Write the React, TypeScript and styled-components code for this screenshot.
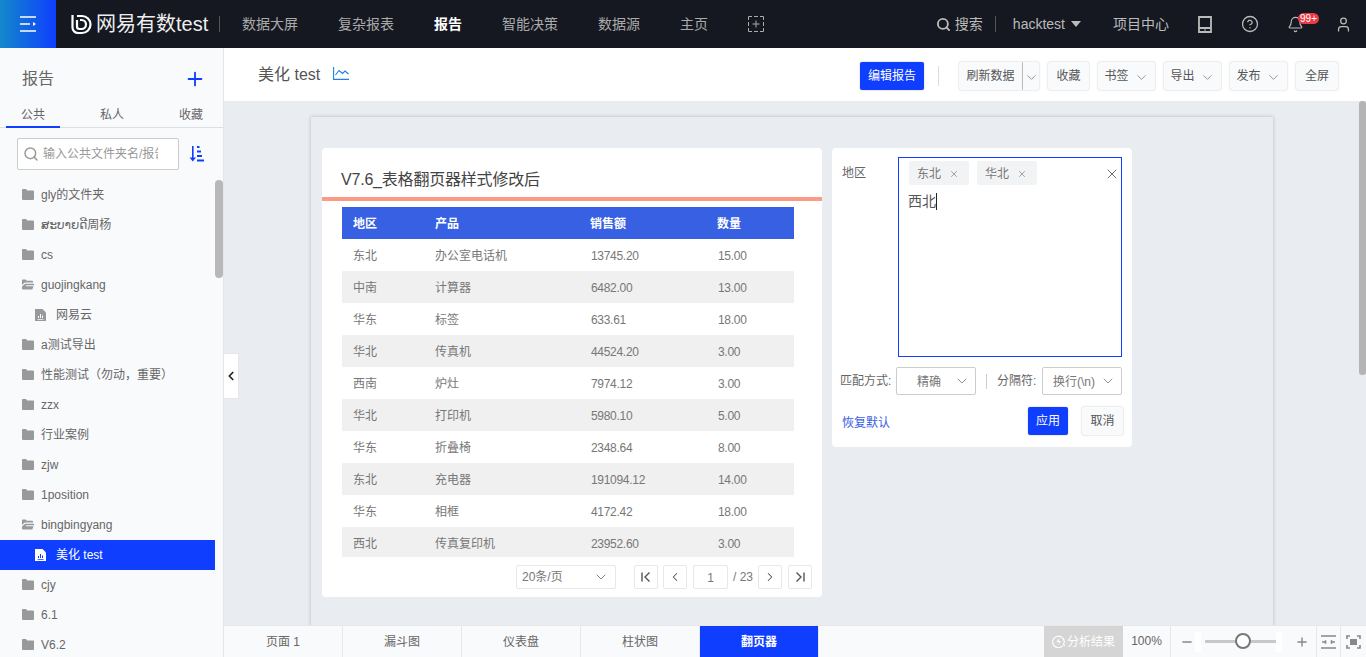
import React from "react";
import styled, { createGlobalStyle } from "styled-components";
import { ChevronDown, ChevronLeft, ChevronRight, Plus, Search, X, Minus, CircleHelp, Bell, User } from "lucide-react";

const Global = createGlobalStyle`
  html, body { margin: 0; padding: 0; height: 100%; overflow: hidden; }
  body { font-family: "Liberation Sans", "Noto Sans CJK SC", "DejaVu Sans", sans-serif; font-size: 12px; line-height: 1.3; color: #666; }
  * { box-sizing: border-box; }
`;

const BLUE = "#0f3eff";

const Shell = styled.div`
  width: 1366px;
  height: 657px;
  display: flex;
  flex-direction: column;
  overflow: hidden;
`;

const Header = styled.header`
  height: 48px;
  flex: none;
  display: flex;
  align-items: center;
  background: #151821;
  color: #bbb;
  font-size: 14px;
`;

const MenuToggle = styled.div`
  width: 56px;
  height: 48px;
  flex: none;
  display: flex;
  align-items: center;
  justify-content: center;
  background: linear-gradient(90deg, #1389cb, ${BLUE});
`;

const Logo = styled.div`
  display: flex;
  align-items: center;
  margin-left: 15px;
  gap: 4px;
  color: #eee;
  font-size: 20px;
  width: 148px;
  white-space: nowrap;
`;

const NavDivider = styled.span`
  width: 1px;
  height: 16px;
  background: #555;
  flex: none;
`;

const Nav = styled.nav`
  display: flex;
  align-items: center;
  gap: 40px;
  margin-left: 22px;
`;

const NavItem = styled.span<{ $active?: boolean }>`
  color: ${({ $active }) => ($active ? "#fff" : "#aaa")};
  font-weight: ${({ $active }) => ($active ? 700 : 400)};
`;

const HeaderRight = styled.div`
  margin-left: auto;
  display: flex;
  align-items: center;
  padding-right: 14px;
`;

const HeaderSearch = styled.span`
  display: flex;
  align-items: center;
  gap: 4px;
  margin-right: 12px;
`;

const UserName = styled.span`
  display: flex;
  align-items: center;
  gap: 6px;
  margin-left: 17px;
  margin-right: 32px;
`;

const Caret = styled.i`
  width: 0;
  height: 0;
  border-left: 5px solid transparent;
  border-right: 5px solid transparent;
  border-top: 6px solid #bbb;
`;

const HeaderIcon = styled.span<{ $gap: number }>`
  position: relative;
  display: flex;
  margin-left: ${({ $gap }) => $gap}px;
`;

const Badge = styled.b`
  position: absolute;
  left: 11px;
  top: -3px;
  height: 11px;
  width: 21px;
  border-radius: 6px;
  background: #ec3a45;
  color: #fff;
  font-size: 10px;
  line-height: 11px;
  font-weight: 400;
  text-align: center;
`;

const Body = styled.div`
  flex: 1;
  min-height: 0;
  display: flex;
  position: relative;
`;

const Sidebar = styled.aside`
  width: 224px;
  flex: none;
  position: relative;
  background: #f9fafc;
  border-right: 1px solid #e4e6ea;
  overflow: hidden;
`;

const SideTitle = styled.div`
  height: 61px;
  display: flex;
  align-items: center;
  justify-content: space-between;
  padding: 2px 17px 0 22px;
  font-size: 16px;
  color: #666;
  svg { margin-top: -2px; }
`;

const Tabs = styled.div`
  display: flex;
  height: 19px;
  padding-left: 6px;
  gap: 25px;
  border-bottom: 1px solid #dcdfe4;
`;

const SideTab = styled.div<{ $active?: boolean }>`
  width: 54px;
  text-align: center;
  line-height: 12px;
  height: 19px;
  color: #666;
  border-bottom: 2px solid ${({ $active }) => ($active ? BLUE : "transparent")};
`;

const SearchRow = styled.div`
  display: flex;
  align-items: center;
  gap: 10px;
  padding: 10px 0 10px 17px;
`;

const SearchBox = styled.div`
  width: 162px;
  height: 32px;
  background: #fff;
  border: 1px solid #ccc;
  border-radius: 2px;
  display: flex;
  align-items: center;
  gap: 4px;
  padding-left: 5px;
  color: #999;
  overflow: hidden;
  white-space: nowrap;
`;

const Clip = styled.span`
  width: 115px;
  padding-top: 2px;
  overflow: hidden;
`;

const Row = styled.div<{ $child?: boolean; $active?: boolean }>`
  width: 215px;
  height: 30px;
  display: flex;
  align-items: center;
  gap: ${({ $child }) => ($child ? 10 : 7)}px;
  padding-left: ${({ $child }) => ($child ? 35 : 22)}px;
  padding-top: 2px;
  background: ${({ $active }) => ($active ? BLUE : "transparent")};
  color: ${({ $active }) => ($active ? "#fff" : "#666")};
  white-space: nowrap;
  svg { margin-top: -3px; }
`;

const SideThumb = styled.div`
  position: absolute;
  left: 215px;
  top: 132px;
  width: 8px;
  height: 98px;
  border-radius: 4px;
  background: #b8b8b8;
`;

const CollapseHandle = styled.div`
  position: absolute;
  left: 224px;
  top: 305px;
  width: 15px;
  height: 46px;
  background: #fff;
  border: 1px solid #e4e6ea;
  border-left: none;
  display: flex;
  align-items: center;
  justify-content: center;
  color: #222;
  z-index: 2;
`;

const Main = styled.main`
  flex: 1;
  min-width: 0;
  display: flex;
  flex-direction: column;
  position: relative;
`;

const Toolbar = styled.div`
  height: 53px;
  flex: none;
  background: #fff;
  display: flex;
  align-items: center;
  padding: 0 28px 0 34px;
`;

const ReportTitle = styled.div`
  display: flex;
  align-items: center;
  gap: 13px;
  font-size: 16px;
  color: #555;
  margin-top: 2px;
  margin-right: auto;
  svg { margin-top: -3px; }
`;

const Actions = styled.div`
  display: flex;
  align-items: center;
  gap: 9px;
  margin-top: 3px;
`;

const Btn = styled.button<{ $w: number; $primary?: boolean }>`
  width: ${({ $w }) => $w}px;
  height: 28px;
  padding: 2px 0 0;
  display: inline-flex;
  align-items: center;
  justify-content: center;
  gap: 5px;
  font: inherit;
  font-size: 12px;
  border-radius: 2px;
  border: none;
  color: ${({ $primary }) => ($primary ? "#fff" : "#555")};
  background: ${({ $primary }) => ($primary ? BLUE : "#f9fafc")};
  box-shadow: 0 0 2px rgba(0, 0, 0, 0.25);
`;

const SplitBtn = styled(Btn)`
  border-right: 1px solid #ccc;
  border-radius: 2px 0 0 2px;
`;

const SplitCaret = styled(Btn)`
  margin-left: -9px;
  border-radius: 0 2px 2px 0;
`;

const ToolDivider = styled.span`
  width: 1px;
  height: 20px;
  background: #ddd;
  margin: 0 11px 0 5px;
`;

const Canvas = styled.div`
  flex: 1;
  min-height: 0;
  background: #e9edf2;
  padding: 16px 0 0 87px;
  overflow: hidden;
  position: relative;
`;

const PageSheet = styled.div`
  width: 962px;
  height: 600px;
  background: #e9edf2;
  box-shadow: 0 0 4px rgba(0, 0, 0, 0.22);
  padding: 31px 11px;
  display: flex;
  align-items: flex-start;
  gap: 10px;
`;

const MainThumb = styled.div`
  position: absolute;
  right: 0;
  top: 53px;
  width: 7px;
  height: 274px;
  border-radius: 3px;
  background: #b4b4b4;
`;

const TableCard = styled.section`
  width: 500px;
  height: 449px;
  background: #fff;
  border-radius: 4px;
`;

const CardTitle = styled.div`
  height: 53px;
  border-bottom: 4px solid #fb9a85;
  padding: 21px 0 0 19px;
  font-size: 16px;
  line-height: 22px;
  letter-spacing: -0.2px;
  color: #444;
`;

const TableWrap = styled.div`
  margin: 6px 28px 0 20px;
  height: 350px;
  overflow: hidden;
`;

const Table = styled.table`
  width: 452px;
  border-collapse: collapse;
  table-layout: fixed;
`;

const Th = styled.th<{ $w: number }>`
  width: ${({ $w }) => $w}px;
  height: 32px;
  padding: 4px 0 0 11px;
  background: #3860e2;
  color: #fff;
  text-align: left;
  font-size: 12px;
  font-weight: 700;
`;

const Tr = styled.tr`
  &:nth-child(even) { background: #f0f0f0; }
`;

const Td = styled.td<{ $num?: boolean }>`
  height: 32px;
  padding: 4px 0 0 ${({ $num }) => ($num ? 12 : 11)}px;
  letter-spacing: ${({ $num }) => ($num ? "-0.3px" : "0")};
  color: #777;
`;

const Pager = styled.div`
  display: flex;
  align-items: center;
  margin-top: 8px;
  padding-left: 194px;
`;

const PageSize = styled.div`
  width: 100px;
  height: 24px;
  border: 1px solid #e8e8e8;
  border-radius: 2px;
  display: flex;
  align-items: center;
  justify-content: space-between;
  padding: 2px 6px 0 5px;
  color: #777;
  margin-right: 18px;
  svg { margin-top: -2px; }
`;

const PageBtn = styled.div<{ $gap: number }>`
  width: 24px;
  height: 24px;
  border: 1px solid #e8e8e8;
  border-radius: 2px;
  display: flex;
  align-items: center;
  justify-content: center;
  color: #555;
  margin-right: ${({ $gap }) => $gap}px;
`;

const PageInput = styled.div`
  width: 35px;
  height: 24px;
  border: 1px solid #e8e8e8;
  border-radius: 2px;
  text-align: center;
  line-height: 24px;
  color: #777;
`;

const PageTotal = styled.span`
  width: 30px;
  padding-top: 2px;
  text-align: center;
  color: #777;
`;

const FilterCard = styled.section`
  width: 300px;
  height: 299px;
  background: #fff;
  border-radius: 4px;
  padding: 9px 10px 0 9px;
`;

const FilterTop = styled.div`
  display: flex;
`;

const FilterLabel = styled.span`
  width: 57px;
  padding-left: 1px;
  padding-top: 9px;
  color: #666;
`;

const ValueBox = styled.div`
  position: relative;
  width: 224px;
  height: 200px;
  border: 1px solid ${BLUE};
  padding: 3px 10px;
`;

const TagRow = styled.div`
  display: flex;
  gap: 8px;
`;

const Tag = styled.span`
  height: 24px;
  display: flex;
  align-items: center;
  gap: 8px;
  padding: 4px 10px 0 8px;
  background: #f2f3f5;
  border-radius: 2px;
  color: #777;
  svg { margin-top: -3px; }
`;

const ValueText = styled.div`
  margin-top: 6px;
  margin-left: -1px;
  font-size: 14px;
  line-height: 20px;
  color: #555;
  display: flex;
  align-items: center;
`;

const TextCaret = styled.i`
  width: 1px;
  height: 17px;
  background: #222;
`;

const BoxClear = styled.span`
  position: absolute;
  right: 1px;
  top: 8px;
  display: flex;
  color: #666;
`;

const OptionRow = styled.div`
  display: flex;
  align-items: center;
  margin-top: 10px;
  white-space: nowrap;
  color: #666;
`;

const OptionLabel = styled.span<{ $w: number }>`
  width: ${({ $w }) => $w}px;
  margin-left: ${({ $w }) => ($w > 50 ? -1 : 0)}px;
  margin-right: ${({ $w }) => ($w > 50 ? 1 : 0)}px;
  padding-top: 2px;
`;

const Select = styled.div<{ $w: number; $pad: number }>`
  width: ${({ $w }) => $w}px;
  height: 28px;
  border: 1px solid #ccc;
  border-radius: 2px;
  display: flex;
  align-items: center;
  justify-content: space-between;
  padding: 3px 5px 0 ${({ $pad }) => $pad}px;
  color: #777;
  svg { margin-top: -3px; }
`;

const OptionDivider = styled.span`
  width: 1px;
  height: 15px;
  background: #ccc;
  margin: 0 10px;
`;

const FooterRow = styled.div`
  display: flex;
  align-items: center;
  margin-top: 12px;
  padding-left: 1px;
  gap: 14px;
  margin-right: -1px;
`;

const ResetLink = styled.a`
  margin-right: auto;
  padding-top: 6px;
  color: #3860e2;
`;

const Bottom = styled.div`
  height: 32px;
  flex: none;
  display: flex;
  align-items: stretch;
  background: #f9fafc;
  border-top: 1px solid #e6e8ec;
  color: #666;
`;

const PageTab = styled.div<{ $active?: boolean }>`
  width: 119px;
  display: flex;
  align-items: center;
  justify-content: center;
  padding-top: 2px;
  border-right: 1px solid #e6e8ec;
  background: ${({ $active }) => ($active ? BLUE : "transparent")};
  color: ${({ $active }) => ($active ? "#fff" : "#666")};
  font-weight: ${({ $active }) => ($active ? 700 : 400)};
`;

const BottomRight = styled.div`
  margin-left: auto;
  display: flex;
  align-items: stretch;
`;

const Analysis = styled.div`
  width: 79px;
  display: flex;
  align-items: center;
  justify-content: center;
  gap: 2px;
  padding-top: 2px;
  background: #d5d5d5;
  color: #fff;
  svg { margin-top: -2px; }
`;

const Zoom = styled.div`
  width: 48px;
  display: flex;
  align-items: center;
  justify-content: center;
  border-right: 1px solid #e6e8ec;
`;

const SliderArea = styled.div`
  width: 146px;
  display: flex;
  align-items: center;
  padding-left: 9px;
  gap: 11px;
  border-right: 1px solid #e6e8ec;
  color: #888;
`;

const Track = styled.div`
  position: relative;
  width: 72px;
  height: 3px;
  margin-right: 7px;
  background: #c8c8c8;
  &::before, &::after {
    content: "";
    position: absolute;
    top: -8px;
    width: 6px;
    height: 20px;
    background: #fff;
  }
  &::before { left: -10px; }
  &::after { right: -5px; }
`;

const Knob = styled.i`
  position: absolute;
  left: 30px;
  top: -7px;
  width: 16px;
  height: 16px;
  border-radius: 50%;
  background: #fff;
  border: 2px solid #777;
`;

const FitIcon = styled.div`
  width: 24px;
  display: flex;
  align-items: center;
  justify-content: center;
  border-right: 1px solid #e6e8ec;
`;

const FullIcon = styled.div`
  width: 25px;
  display: flex;
  align-items: center;
  justify-content: center;
`;

const LogoMark = () => (
  <svg width="21" height="21" viewBox="0 0 21 21" fill="none" stroke="#fff" strokeWidth="2.2">
    <path d="M1.5 1v12.5a5.5 5.5 0 0 0 5.5 5.5h4a8.5 8.5 0 0 0 0-17H6" />
    <path d="M6 6v6.5a2.5 2.5 0 0 0 2.5 2.5h2a4.5 4.5 0 0 0 0-9H9" />
  </svg>
);

const FolderIcon = () => (
  <svg width="12" height="11" viewBox="0 0 12 11" fill="#999">
    <path d="M0 1a1 1 0 0 1 1-1h3l1.2 1.5H11a1 1 0 0 1 1 1V10a1 1 0 0 1-1 1H1a1 1 0 0 1-1-1z" />
  </svg>
);

const OpenFolderIcon = () => (
  <svg width="12" height="11" viewBox="0 0 13 11" fill="#999">
    <path d="M0 1a1 1 0 0 1 1-1h3l1.2 1.5H11a1 1 0 0 1 1 1V3.4H3L0 6z" />
    <path d="M0 10.2V7.6L3.4 4.6H13v1.6H4.2v1.2H12.6L11.4 10a1 1 0 0 1-1 1H1a1 1 0 0 1-1-.8z" />
  </svg>
);

const ReportIcon = ({ active }: { active?: boolean }) => (
  <svg width="11" height="12" viewBox="0 0 11 12">
    <path d="M0 0h7.5L11 3.5V12H0z" fill={active ? "#fff" : "#999"} />
    <path d="M3 7h1v2H3zM5 5h1v4H5zM7 6.5h1V9H7zM2.5 10h6v.8h-6z" fill={active ? BLUE : "#f9fafc"} />
  </svg>
);

const SortIcon = () => (
  <svg width="15" height="16" viewBox="0 0 15 16" fill={BLUE}>
    <path d="M3 0h1.6v11.5H7L3.8 15.5.6 11.5H3z" />
    <path d="M8 0h2.5v2H8zM8 4.5h4v2H8zM8 9h5v2H8zM8 13.5h7v2H8z" />
  </svg>
);

const TabletIcon = () => (
  <svg width="14" height="17" viewBox="0 0 14 17" fill="none" stroke="#bbb" strokeWidth="1.8">
    <path d="M1 1h12v15H1zM1 12h12" />
    <path d="M7 13.6v1" />
  </svg>
);

const BoxPlusIcon = () => (
  <svg width="16" height="16" viewBox="0 0 16 16" fill="none" stroke="#aaa">
    <path d="M.5 4V.5H4M6 .5h4M12 .5h3.5V4M15.5 6v4M15.5 12v3.5H12M10 15.5H6M4 15.5H.5V12M.5 10V6M8 4.5v7M4.5 8h7" />
  </svg>
);

const LineChartIcon = () => (
  <svg width="16" height="13" viewBox="0 0 16 13" fill="none" stroke="#1f7fe0" strokeWidth="1.1">
    <path d="M.6 0v12.4H16" />
    <path d="M2.5 8 6 3.5l3.5 3L12 4l3.5 3" />
  </svg>
);

const FitWidthIcon = () => (
  <svg width="15" height="14" viewBox="0 0 15 14" fill="none" stroke="#888" strokeWidth="1.6">
    <path d="M0 1h15M0 13h15" />
    <path d="M1 7h4M10 7h4" />
    <path d="M4.5 5.2v3.6M10.5 5.2v3.6" />
  </svg>
);

const FullScreenIcon = () => (
  <svg width="15" height="14" viewBox="0 0 15 14" fill="none" stroke="#888" strokeWidth="1.6">
    <path d="M1 4V1h3M11 1h3v3M14 10v3h-3M4 13H1v-3" />
    <rect x="4" y="4" width="7" height="6" fill="#888" stroke="none" />
  </svg>
);

const AnalysisIcon = () => (
  <svg width="13" height="13" viewBox="0 0 13 13" fill="none" stroke="#fff" strokeWidth="1.1">
    <path d="M11 10.5A5.8 5.8 0 1 1 12.2 6.5c0 1-.2 1.8-.6 2.6l1 1.9" />
    <path d="M7 3 4.5 7H7l-.8 3L9 6H6.8z" fill="#fff" stroke="none" />
  </svg>
);

const FirstIcon = () => (
  <svg width="12" height="12" viewBox="0 0 12 12" fill="none" stroke="#555" strokeWidth="1.4">
    <path d="M2 1.5v9M9.5 1.5 5 6l4.5 4.5" />
  </svg>
);

const LastIcon = () => (
  <svg width="12" height="12" viewBox="0 0 12 12" fill="none" stroke="#555" strokeWidth="1.4">
    <path d="M10 1.5v9M2.5 1.5 7 6l-4.5 4.5" />
  </svg>
);

const MenuIcon = () => (
  <svg width="16" height="16" viewBox="0 0 16 16" fill="none" stroke="#fff" strokeWidth="1.4">
    <path d="M0 1h16M0 15h16M0 8h10" />
    <path d="M13 6 16 8l-3 2z" fill="#fff" stroke="none" />
  </svg>
);

type TreeItem = { name: string; kind: "folder" | "open" | "report"; active?: boolean };

const tree: TreeItem[] = [
  { name: "gly的文件夹", kind: "folder" },
  { name: "ສະບາຍດີ周杨", kind: "folder" },
  { name: "cs", kind: "folder" },
  { name: "guojingkang", kind: "open" },
  { name: "网易云", kind: "report" },
  { name: "a测试导出", kind: "folder" },
  { name: "性能测试（勿动，重要）", kind: "folder" },
  { name: "zzx", kind: "folder" },
  { name: "行业案例", kind: "folder" },
  { name: "zjw", kind: "folder" },
  { name: "1position", kind: "folder" },
  { name: "bingbingyang", kind: "open" },
  { name: "美化 test", kind: "report", active: true },
  { name: "cjy", kind: "folder" },
  { name: "6.1", kind: "folder" },
  { name: "V6.2", kind: "folder" },
];

const rows = [
  ["东北", "办公室电话机", "13745.20", "15.00"],
  ["中南", "计算器", "6482.00", "13.00"],
  ["华东", "标签", "633.61", "18.00"],
  ["华北", "传真机", "44524.20", "3.00"],
  ["西南", "炉灶", "7974.12", "3.00"],
  ["华北", "打印机", "5980.10", "5.00"],
  ["华东", "折叠椅", "2348.64", "8.00"],
  ["东北", "充电器", "191094.12", "14.00"],
  ["华东", "相框", "4172.42", "18.00"],
  ["西北", "传真复印机", "23952.60", "3.00"],
];

const navItems = ["数据大屏", "复杂报表", "报告", "智能决策", "数据源", "主页"];
const columns: [string, number][] = [["地区", 82], ["产品", 155], ["销售额", 127], ["数量", 88]];
const tabs = ["页面 1", "漏斗图", "仪表盘", "柱状图", "翻页器"];
const caret = <ChevronDown size={15} color="#888" strokeWidth={1.4} />;

export default function App() {
  return (
    <Shell>
      <Global />
      <Header>
        <MenuToggle><MenuIcon /></MenuToggle>
        <Logo><LogoMark />网易有数test</Logo>
        <NavDivider />
        <Nav>
          {navItems.map((n) => <NavItem key={n} $active={n === "报告"}>{n}</NavItem>)}
          <BoxPlusIcon />
        </Nav>
        <HeaderRight>
          <HeaderSearch><Search size={15} strokeWidth={3} />搜索</HeaderSearch>
          <NavDivider />
          <UserName>hacktest<Caret /></UserName>
          项目中心
          <HeaderIcon $gap={29}><TabletIcon /></HeaderIcon>
          <HeaderIcon $gap={29}><CircleHelp size={18} strokeWidth={1.7} /></HeaderIcon>
          <HeaderIcon $gap={28}><Bell size={17} strokeWidth={1.6} /><Badge>99+</Badge></HeaderIcon>
          <HeaderIcon $gap={31}><User size={17} strokeWidth={1.8} /></HeaderIcon>
        </HeaderRight>
      </Header>
      <Body>
        <Sidebar>
          <SideTitle>报告<Plus size={22} color={BLUE} strokeWidth={2} /></SideTitle>
          <Tabs>
            <SideTab $active>公共</SideTab>
            <SideTab>私人</SideTab>
            <SideTab>收藏</SideTab>
          </Tabs>
          <SearchRow>
            <SearchBox><Search size={16} color="#999" strokeWidth={2.2} /><Clip>输入公共文件夹名/报告</Clip></SearchBox>
            <SortIcon />
          </SearchRow>
          {tree.map((t) => (
            <Row key={t.name} $child={t.kind === "report"} $active={t.active}>
              {t.kind === "folder" && <FolderIcon />}
              {t.kind === "open" && <OpenFolderIcon />}
              {t.kind === "report" && <ReportIcon active={t.active} />}
              {t.name}
            </Row>
          ))}
          <SideThumb />
        </Sidebar>
        <CollapseHandle><ChevronLeft size={14} strokeWidth={3} /></CollapseHandle>
        <Main>
          <Toolbar>
            <ReportTitle>美化 test<LineChartIcon /></ReportTitle>
            <Actions>
              <Btn $w={64} $primary>编辑报告</Btn>
              <ToolDivider />
              <SplitBtn $w={64}>刷新数据</SplitBtn>
              <SplitCaret $w={16}>{caret}</SplitCaret>
              <Btn $w={41}>收藏</Btn>
              <Btn $w={57}>书签{caret}</Btn>
              <Btn $w={57}>导出{caret}</Btn>
              <Btn $w={57}>发布{caret}</Btn>
              <Btn $w={42}>全屏</Btn>
            </Actions>
          </Toolbar>
          <Canvas>
            <PageSheet>
              <TableCard>
                <CardTitle>V7.6_表格翻页器样式修改后</CardTitle>
                <TableWrap>
                  <Table>
                    <thead>
                      <tr>{columns.map(([c, w]) => <Th key={c} $w={w}>{c}</Th>)}</tr>
                    </thead>
                    <tbody>
                      {rows.map((r, i) => (
                        <Tr key={i}>{r.map((c, j) => <Td key={j} $num={j > 1}>{c}</Td>)}</Tr>
                      ))}
                    </tbody>
                  </Table>
                </TableWrap>
                <Pager>
                  <PageSize>20条/页<ChevronDown size={16} strokeWidth={1.2} color="#666" /></PageSize>
                  <PageBtn $gap={5}><FirstIcon /></PageBtn>
                  <PageBtn $gap={6}><ChevronLeft size={14} strokeWidth={1.8} /></PageBtn>
                  <PageInput>1</PageInput>
                  <PageTotal>/ 23</PageTotal>
                  <PageBtn $gap={6}><ChevronRight size={14} strokeWidth={1.8} /></PageBtn>
                  <PageBtn $gap={0}><LastIcon /></PageBtn>
                </Pager>
              </TableCard>
              <FilterCard>
                <FilterTop>
                  <FilterLabel>地区</FilterLabel>
                  <ValueBox>
                    <TagRow>
                      <Tag>东北<X size={10} strokeWidth={1.6} /></Tag>
                      <Tag>华北<X size={10} strokeWidth={1.6} /></Tag>
                    </TagRow>
                    <ValueText>西北<TextCaret /></ValueText>
                    <BoxClear><X size={16} strokeWidth={1.4} /></BoxClear>
                  </ValueBox>
                </FilterTop>
                <OptionRow>
                  <OptionLabel $w={55}>匹配方式:</OptionLabel>
                  <Select $w={80} $pad={20}>精确<ChevronDown size={16} strokeWidth={1.2} /></Select>
                  <OptionDivider />
                  <OptionLabel $w={45}>分隔符:</OptionLabel>
                  <Select $w={80} $pad={10}>换行(\n)<ChevronDown size={16} strokeWidth={1.2} /></Select>
                </OptionRow>
                <FooterRow>
                  <ResetLink>恢复默认</ResetLink>
                  <Btn $w={40} $primary>应用</Btn>
                  <Btn $w={41}>取消</Btn>
                </FooterRow>
              </FilterCard>
            </PageSheet>
          </Canvas>
          <MainThumb />
          <Bottom>
            {tabs.map((t) => <PageTab key={t} $active={t === "翻页器"}>{t}</PageTab>)}
            <BottomRight>
              <Analysis><AnalysisIcon />分析结果</Analysis>
              <Zoom>100%</Zoom>
              <SliderArea>
                <Minus size={14} strokeWidth={2.4} />
                <Track><Knob /></Track>
                <Plus size={14} strokeWidth={2.4} />
              </SliderArea>
              <FitIcon><FitWidthIcon /></FitIcon>
              <FullIcon><FullScreenIcon /></FullIcon>
            </BottomRight>
          </Bottom>
        </Main>
      </Body>
    </Shell>
  );
}
